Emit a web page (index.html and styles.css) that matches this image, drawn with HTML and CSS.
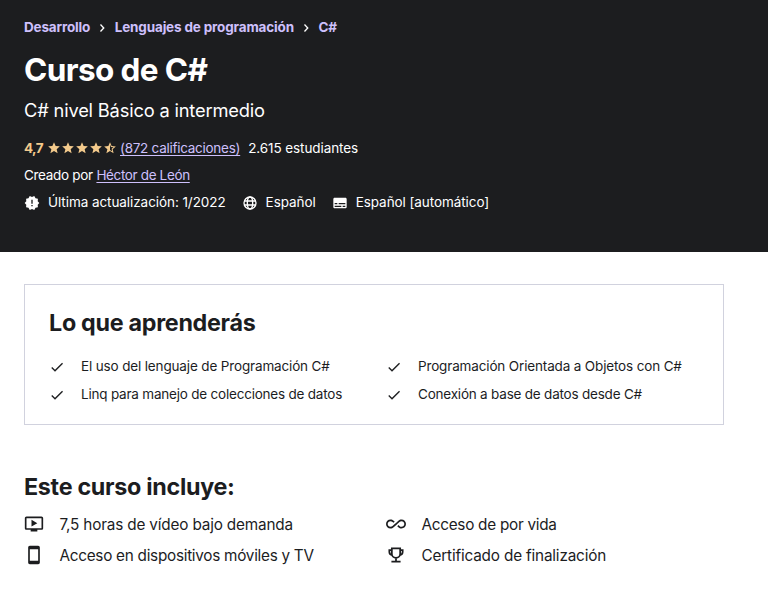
FILE: index.html
```html
<!DOCTYPE html>
<html lang="es">
<head>
<meta charset="utf-8">
<title>Curso de C#</title>
<link rel="stylesheet" href="styles.css">
</head>
<body>
<svg class="defs" aria-hidden="true">
  <symbol id="next" viewBox="0 0 24 24"><path d="M8.600 17.200 13.400 12 8.600 6.800 10.200 5.200l6.400 6.800-6.400 6.800z"/></symbol>
  <symbol id="star" viewBox="0 0 24 24"><path d="M12 17.300 18.200 21l-1.600-7L22 9.200l-7.200-.6L12 2 9.200 8.600 2 9.200 7.500 14l-1.700 7z"/></symbol>
  <symbol id="half" viewBox="0 0 24 24"><path d="m22 9.240-7.190-.62L12 2 9.190 8.630 2 9.240l5.460 4.730L5.820 21 12 17.270 18.180 21l-1.630-7.030L22 9.240zM12 15.400V6.100l1.710 4.040 4.380.38-3.320 2.880 1 4.280L12 15.400z"/></symbol>
  <symbol id="badge" viewBox="0 0 24 24"><path d="m23 12-2.440-2.780.34-3.680-3.610-.82-1.890-3.180L12 3 8.600 1.540 6.710 4.720l-3.610.81.34 3.680L1 12l2.440 2.780-.34 3.690 3.610.82 1.890 3.180L12 21l3.400 1.460 1.890-3.180 3.610-.82-.34-3.680L23 12zm-10 5h-2v-2h2v2zm0-4h-2V7h2v6z"/></symbol>
  <symbol id="globe" viewBox="0 0 24 24"><g fill="none" stroke="currentColor" stroke-width="2"><circle cx="12" cy="12" r="9"/><ellipse cx="12" cy="12" rx="4" ry="9"/><path d="M3.500 9h17M3.500 15h17"/></g></symbol>
  <symbol id="captions" viewBox="0 0 24 24"><path d="M20 4H4c-1.100 0-2 .9-2 2v12c0 1.100.9 2 2 2h16c1.100 0 2-.9 2-2V6c0-1.100-.9-2-2-2zM4 12h4v2H4v-2zm10 6H4v-2h10v2zm6 0h-4v-2h4v2zm0-4H10v-2h10v2z"/></symbol>
  <symbol id="check" viewBox="0 0 24 24"><path d="M9 16.200 4.800 12l-1.400 1.400L9 19 21 7l-1.400-1.400z"/></symbol>
  <symbol id="video" viewBox="0 0 24 24"><path d="M21 3H3c-1.110 0-2 .89-2 2v12c0 1.100.89 2 2 2h5v2h8v-2h5c1.100 0 1.990-.9 1.990-2L23 5c0-1.110-.9-2-2-2zm0 14H3V5h18v12zm-5-6-7 4V7z"/></symbol>
  <symbol id="phone" viewBox="0 0 24 24"><path d="M17 1H7c-1.100 0-2 .9-2 2v18c0 1.100.9 2 2 2h10c1.100 0 2-.9 2-2V3c0-1.100-.9-2-2-2zm0 18H7V5h10v14z"/></symbol>
  <symbol id="infinity" viewBox="0 0 24 24"><path d="M18.600 6.620c-1.440 0-2.800.56-3.770 1.530L12 10.660 10.480 12h.01L7.800 14.390c-.64.64-1.490.99-2.400.99-1.870 0-3.390-1.510-3.390-3.380S3.530 8.620 5.400 8.620c.91 0 1.760.35 2.440 1.030l1.130 1 1.510-1.340L9.220 8.200C8.200 7.180 6.840 6.620 5.400 6.620 2.420 6.620 0 9.040 0 12s2.420 5.380 5.400 5.380c1.440 0 2.800-.56 3.770-1.530l2.830-2.500.01.01L13.520 12h-.01l2.690-2.390c.64-.64 1.490-.99 2.400-.99 1.870 0 3.390 1.510 3.390 3.380s-1.520 3.380-3.390 3.380c-.9 0-1.760-.35-2.440-1.030l-1.140-1.010-1.510 1.340 1.270 1.120c1.020 1.010 2.370 1.570 3.820 1.570 2.980 0 5.400-2.410 5.400-5.370s-2.420-5.380-5.400-5.380z"/></symbol>
  <symbol id="trophy" viewBox="0 0 24 24"><g fill="none" stroke="currentColor" stroke-width="2.100"><path d="M7 4h10v6.500a5 5 0 0 1-10 0zM7 6H4v2.500C4 11 5.500 12 7.600 12.200M17 6h3v2.500c0 2.500-1.500 3.500-3.600 3.700M12 15v5M6.500 20h11"/></g></symbol>
</svg>
<header class="hero">
  <nav class="crumbs"><a>Desarrollo</a><svg class="sep"><use href="#next"/></svg><a>Lenguajes de programación</a><svg class="sep"><use href="#next"/></svg><a class="current">C#</a></nav>
  <h1>Curso de C#</h1>
  <p class="lead">C# nivel Básico a intermedio</p>
  <div class="rating">
    <b class="score">4,7</b>
    <span class="stars"><svg><use href="#star"/></svg><svg><use href="#star"/></svg><svg><use href="#star"/></svg><svg><use href="#star"/></svg><svg><use href="#half"/></svg></span>
    <a class="votes">(872 calificaciones)</a>
    <span class="students">2.615 estudiantes</span>
  </div>
  <div class="author"><span>Creado por</span><a>Héctor de León</a></div>
  <div class="meta">
    <span class="item"><svg><use href="#badge"/></svg>Última actualización: 1/2022</span>
    <span class="item"><svg><use href="#globe"/></svg>Español</span>
    <span class="item"><svg><use href="#captions"/></svg>Español [automático]</span>
  </div>
</header>
<main>
  <section class="learn">
    <h2>Lo que aprenderás</h2>
    <ul>
      <li><svg><use href="#check"/></svg><span>El uso del lenguaje de Programación C#</span></li>
      <li><svg><use href="#check"/></svg><span>Programación Orientada a Objetos con C#</span></li>
      <li class="tight"><svg><use href="#check"/></svg><span>Linq para manejo de colecciones de datos</span></li>
      <li class="tight"><svg><use href="#check"/></svg><span>Conexión a base de datos desde C#</span></li>
    </ul>
  </section>
  <section class="includes">
    <h2>Este curso incluye:</h2>
    <ul>
      <li><svg><use href="#video"/></svg><span>7,5 horas de vídeo bajo demanda</span></li>
      <li class="tight"><svg><use href="#infinity"/></svg><span>Acceso de por vida</span></li>
      <li class="tight"><svg><use href="#phone"/></svg><span>Acceso en dispositivos móviles y TV</span></li>
      <li><svg><use href="#trophy"/></svg><span>Certificado de finalización</span></li>
    </ul>
  </section>
</main>
</body>
</html>
```
FILE: styles.css
```css
* { box-sizing: border-box; margin: 0; padding: 0; }
body { width: 768px; height: 596px; overflow: hidden; background: #fff; color: #1c1d1f; font: 13.5px/20px Inter, "Liberation Sans", sans-serif; }
.defs { display: none; }
svg { display: block; flex: none; fill: currentColor; }
ul { list-style: none; }
a, span, b { white-space: nowrap; }
.hero { height: 252px; padding: 17px 24px 0; background: #1c1d1f; color: #fff; }
.crumbs { display: flex; align-items: center; color: #cec0fc; font-weight: 700; letter-spacing: -0.16px; }
.crumbs .current { letter-spacing: -0.15px; }
.sep { width: 14px; height: 14px; margin: 1px 5.5px 0 5px; color: #fff; }
h1 { margin-top: 13px; font-size: 31.5px; line-height: 40px; font-weight: 700; letter-spacing: -0.6px; }
.lead { margin-top: 7px; font-size: 18.3px; line-height: 26px; letter-spacing: -0.18px; }
.rating { display: flex; align-items: center; margin-top: 15px; }
.score { width: 23px; color: #f3ca8c; letter-spacing: -0.6px; }
.stars { display: flex; width: 73px; color: #f3ca8c; }
.stars svg { width: 14px; height: 14px; }
.votes { letter-spacing: -0.27px; }
.votes, .author a { color: #cec0fc; text-decoration: underline; text-underline-offset: 2px; }
.students { margin-left: 8px; letter-spacing: -0.09px; }
.author { display: flex; gap: 3.5px; margin-top: 7px; letter-spacing: -0.3px; }
.author a { letter-spacing: -0.36px; }
.meta { display: flex; gap: 16px; margin-top: 7px; letter-spacing: -0.07px; }
.item { display: flex; align-items: center; gap: 8px; }
.item svg { width: 16px; height: 16px; margin-top: 1px; }
main { padding: 32px 44px 0 24px; }
h2 { font-size: 23.3px; line-height: 29px; font-weight: 700; letter-spacing: -0.29px; }
.learn { height: 141px; padding: 23px 24px; border: 1px solid #d1d2de; }
.learn ul { display: grid; grid-template-columns: 337px 1fr; row-gap: 8px; margin-top: 19px; letter-spacing: -0.15px; }
.learn .tight { letter-spacing: -0.21px; }
.learn li { display: flex; align-items: center; gap: 16px; }
.learn svg { width: 16px; height: 16px; margin-top: 2px; }
.includes { margin-top: 47px; }
.includes ul { display: grid; grid-template-columns: 362px 1fr; row-gap: 7px; margin-top: 12px; font-size: 15.3px; line-height: 24px; letter-spacing: -0.17px; }
.includes .tight { letter-spacing: -0.27px; }
.includes li { display: flex; align-items: center; gap: 15.500px; }
.includes svg { width: 20px; height: 20px; margin-bottom: 2px; }
```
